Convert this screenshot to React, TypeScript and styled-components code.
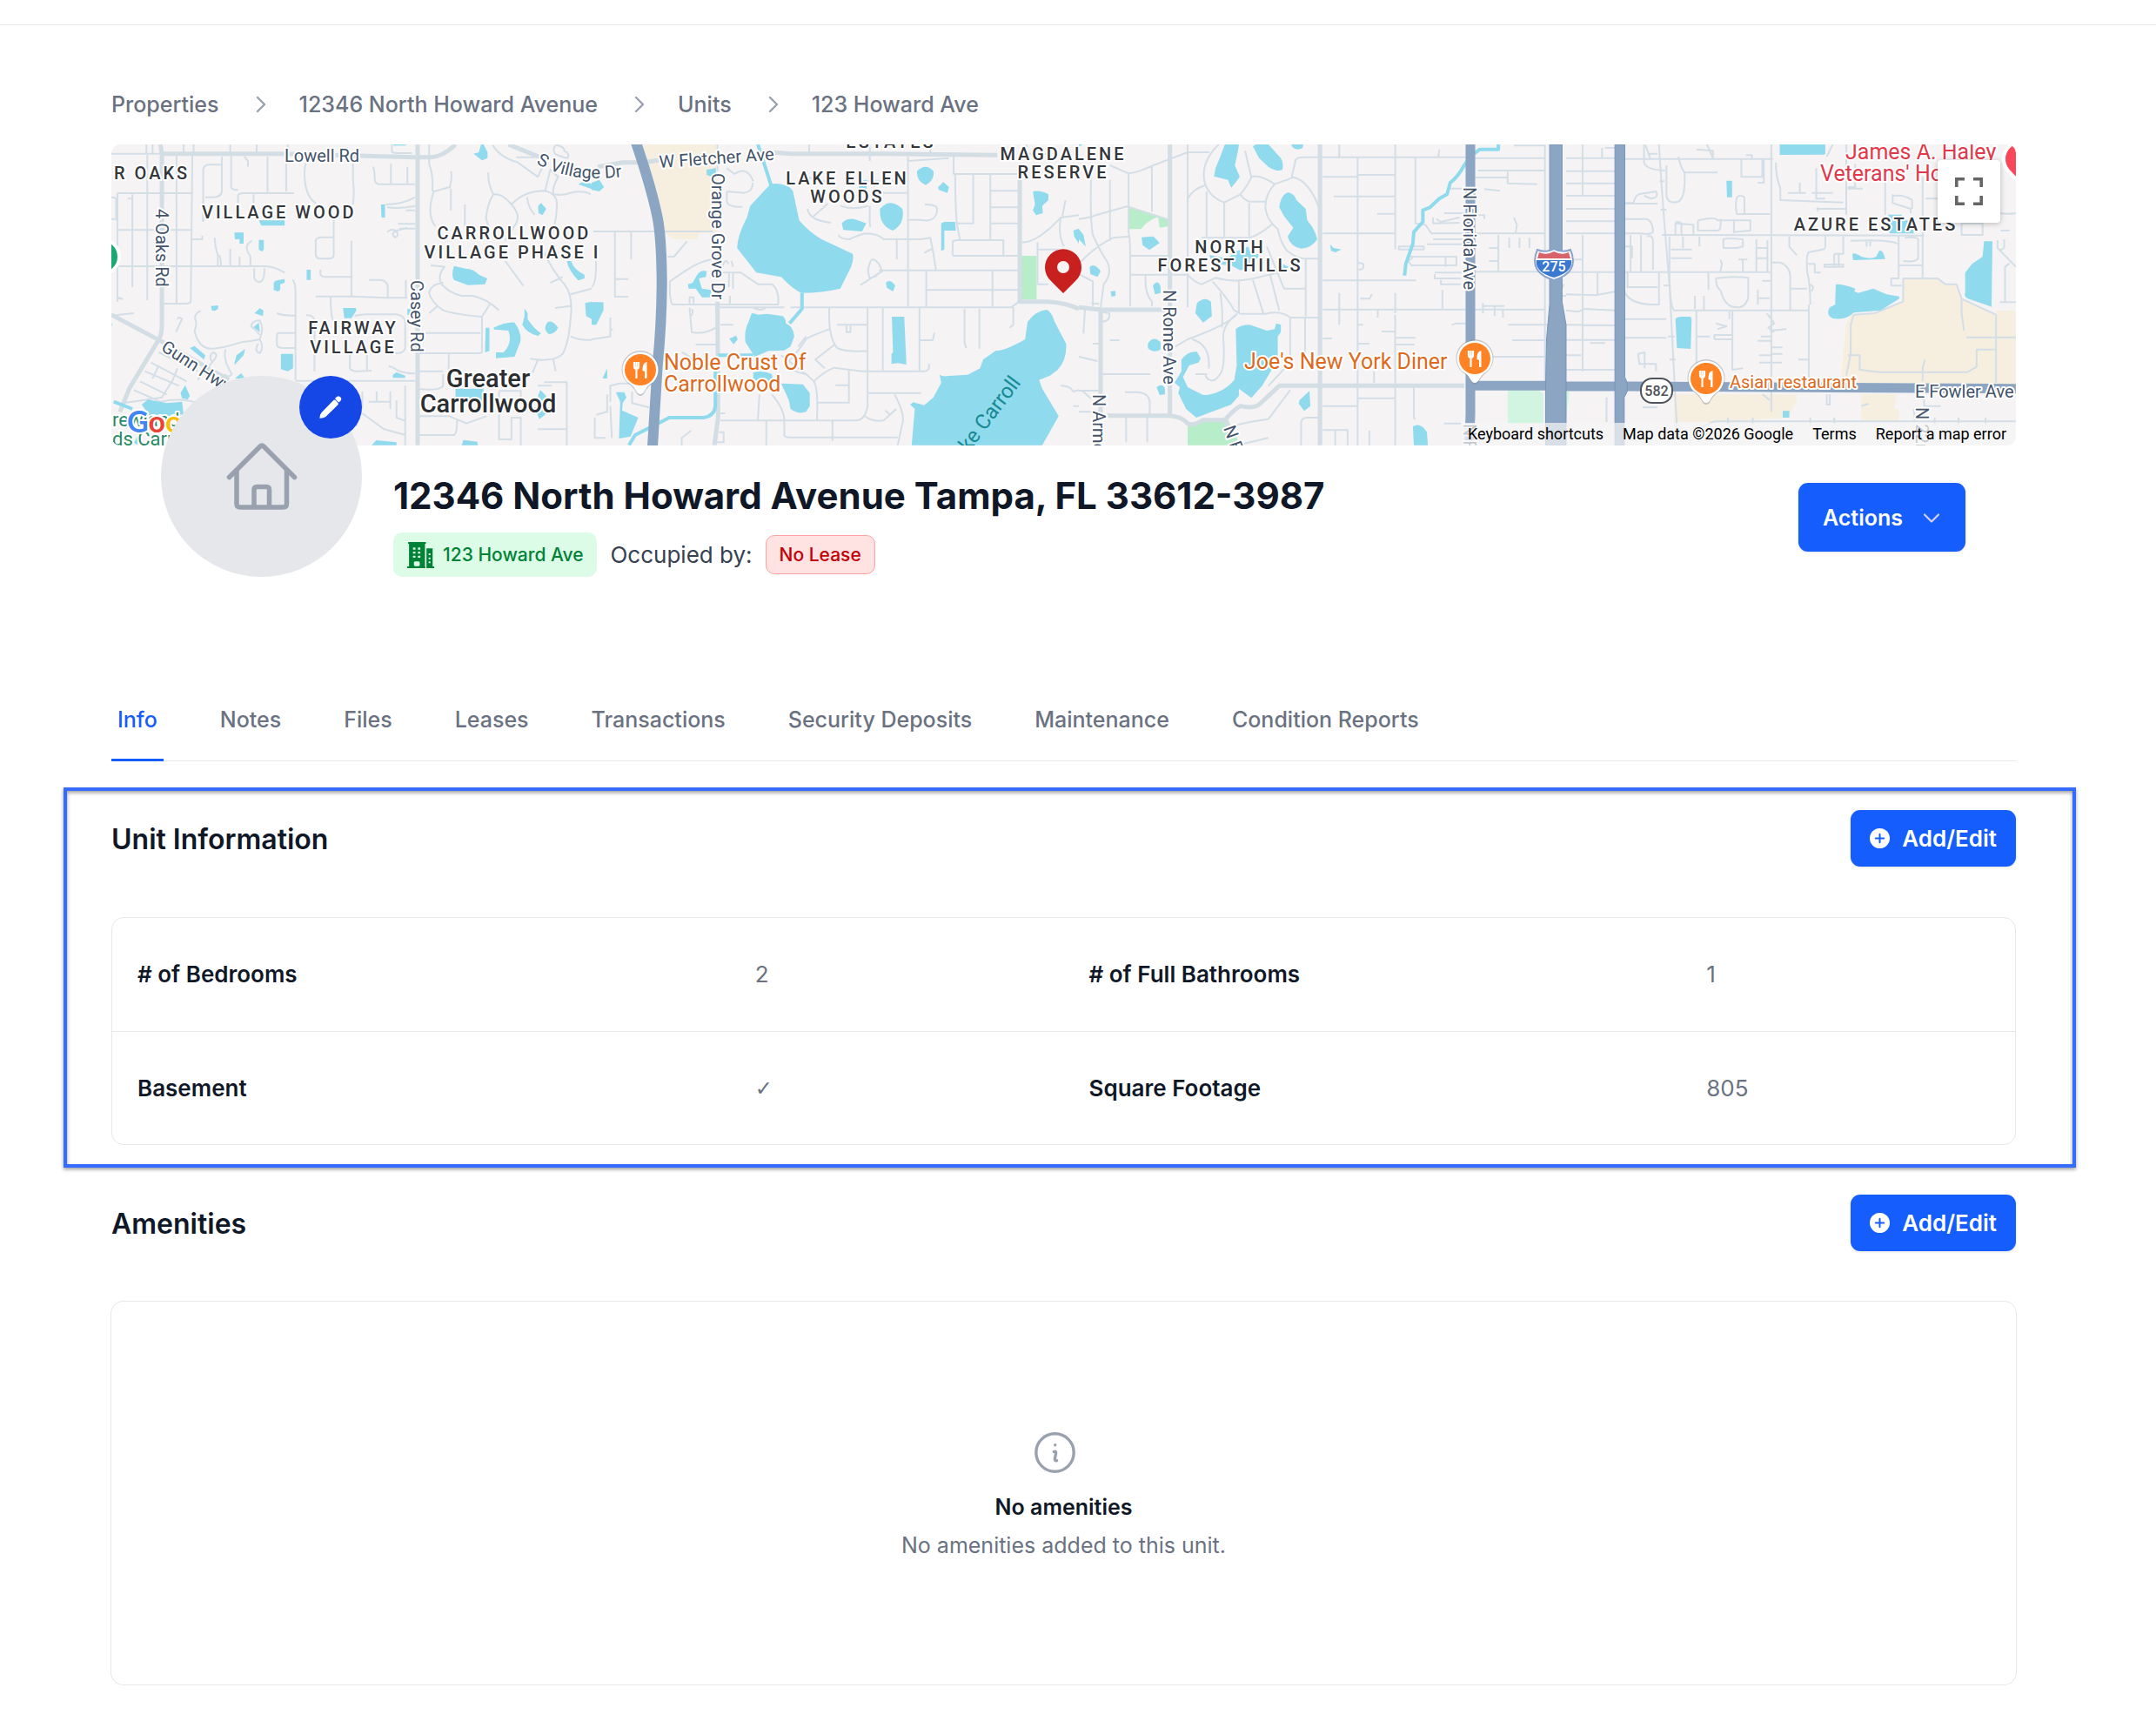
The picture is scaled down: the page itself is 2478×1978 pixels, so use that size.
import React from "react";
import styled, { createGlobalStyle, css } from "styled-components";

const GlobalStyle = createGlobalStyle`
  *, *::before, *::after { box-sizing: border-box; }
  body {
    margin: 0;
    background: #ffffff;
    color: #101828;
    font-family: Inter, "Liberation Sans", sans-serif;
  }
  h1, h2, h3, p, ol, dl, dd { margin: 0; padding: 0; }
  button { font-family: inherit; border: 0; cursor: pointer; }
`;

const Page = styled.div`
  padding-top: 28px;
`;

const Main = styled.main`
  border-top: 1px solid #e5e7eb;
  padding: 71px 161px 41px 128px;
`;

/* ---------- Breadcrumbs ---------- */

const Crumbs = styled.ol`
  display: flex;
  align-items: center;
  gap: 28px;
  list-style: none;
  height: 40px;
  margin-bottom: 26px;
`;

const Crumb = styled.li`
  display: flex;
  align-items: center;
  gap: 28px;
`;

const CrumbLink = styled.a`
  color: #6a7282;
  font-size: 25px;
  line-height: 36px;
  font-weight: 500;
  text-decoration: none;
`;

/* ---------- Map ---------- */

const MapFrame = styled.div`
  position: relative;
  height: 346px;
  border-radius: 10px;
  overflow: hidden;
  background: #f5f3f4;
`;

const MapCanvas = styled.svg`
  display: block;
  width: 100%;
  height: 100%;
  font-family: Roboto, sans-serif;

  .roads path { vector-effect: non-scaling-stroke; fill: none; stroke: #d3dee6; stroke-width: 2; stroke-linejoin: round; }
  .roads .mid { stroke: #d3dde4; stroke-width: 5; }
  .water path { fill: #90daed; }
  .stream path { vector-effect: non-scaling-stroke; fill: none; stroke: #90daed; stroke-width: 4; stroke-linejoin: round; }
  .highway path { vector-effect: non-scaling-stroke; fill: none; stroke: #8ba5c2; stroke-width: 11; }
  .sand path { fill: #f6efdf; }
  .park path { fill: #b8edca; }
  .park .pale { fill: #d2f5e1; }
  text { paint-order: stroke; stroke: #ffffff; stroke-width: 4px; stroke-linejoin: round; }
`;

const AreaLabel = styled.text`
  font-size: 20px;
  font-weight: 500;
  letter-spacing: 3px;
  fill: #33363b;
`;

const TownLabel = styled.text`
  font-size: 29px;
  font-weight: 500;
  fill: #2b2d31;
`;

const RoadLabel = styled.text`
  font-size: 20px;
  fill: #43536a;
`;

const PlaceLabel = styled.text<{ $small?: boolean }>`
  font-size: ${(p) => (p.$small ? 20 : 25)}px;
  fill: #dd6a1c;
`;

const FullscreenButton = styled.button`
  position: absolute;
  top: 18px;
  right: 18px;
  width: 72px;
  height: 72px;
  display: grid;
  place-items: center;
  background: #ffffff;
  border-radius: 4px;
  box-shadow: 0 1px 6px rgba(0, 0, 0, 0.25);
`;

const MapFooter = styled.div`
  position: absolute;
  right: 0;
  bottom: 0;
  display: flex;
  gap: 22px;
  height: 26px;
  padding: 0 11px 0 8px;
  background: rgba(245, 245, 245, 0.72);
`;

const mapNote = css`
  padding: 0;
  background: none;
  color: #000000;
  font-family: Roboto, sans-serif;
  font-size: 18px;
  line-height: 26px;
  text-decoration: none;
`;
const MapNoteButton = styled.button`${mapNote}`;
const MapNoteText = styled.span`${mapNote}`;
const MapNoteLink = styled.a`${mapNote}`;

/* ---------- Unit header ---------- */

const UnitHeader = styled.header`
  display: flex;
  align-items: flex-start;
  gap: 36px;
  padding: 0 58px 0 57px;
`;

const Avatar = styled.div`
  position: relative;
  flex: none;
  width: 231px;
  height: 231px;
  margin-top: -80px;
  display: grid;
  place-items: center;
  border-radius: 50%;
  background: #e5e7eb;
`;

const EditPhoto = styled.button`
  position: absolute;
  top: 0;
  right: 0;
  width: 72px;
  height: 72px;
  padding: 0;
  display: grid;
  place-items: center;
  border-radius: 50%;
  background: #1447e6;
`;

const HeaderText = styled.div`
  flex: 1;
  padding-top: 29px;
`;

const Title = styled.h1`
  font-size: 42px;
  line-height: 58px;
  font-weight: 700;
`;

const Status = styled.div`
  display: flex;
  align-items: center;
  gap: 15px;
  margin-top: 13px;
  color: #364153;
  font-size: 26px;
  line-height: 36px;
`;

const UnitBadge = styled.span`
  display: flex;
  align-items: center;
  gap: 10px;
  height: 51px;
  padding: 0 16px;
  border-radius: 10px;
  background: #dcfce7;
  color: #008236;
  font-size: 21px;
  font-weight: 500;
`;

const LeaseBadge = styled.span`
  display: flex;
  align-items: center;
  height: 45px;
  padding: 0 15px;
  border: 1px solid #ffa2a2;
  border-radius: 10px;
  background: #ffe2e2;
  color: #c10007;
  font-size: 21px;
  font-weight: 500;
`;

const PrimaryButton = styled.button<{ $large?: boolean }>`
  display: flex;
  align-items: center;
  gap: ${(p) => (p.$large ? 22 : 14)}px;
  height: ${(p) => (p.$large ? 79 : 65)}px;
  padding: 0 ${(p) => (p.$large ? 28 : 22)}px;
  border-radius: 11px;
  background: #155dfc;
  box-shadow: 0 1px 3px rgba(0, 0, 0, 0.12);
  color: #ffffff;
  font-size: ${(p) => (p.$large ? 25 : 26)}px;
  font-weight: 600;
  line-height: 36px;
`;

const ActionsSlot = styled.div`
  padding-top: 43px;
`;

/* ---------- Tabs ---------- */

const Tabs = styled.div`
  display: flex;
  gap: 58px;
  margin-top: 145px;
  box-shadow: inset 0 -1px #e5e7eb;
`;

const Tab = styled.button<{ $active?: boolean }>`
  padding: 1px 7px 27px;
  border-bottom: 3px solid ${(p) => (p.$active ? "#155dfc" : "transparent")};
  background: none;
  color: ${(p) => (p.$active ? "#155dfc" : "#6a7282")};
  font-size: 25px;
  line-height: 36px;
  font-weight: 500;
`;

/* ---------- Sections ---------- */

const Highlighted = styled.section`
  margin: 30px -69px 0 -55px;
  padding: 22px 65px 22px 51px;
  border: 4px solid #366bff;
  box-shadow: 0 2px 4px rgba(0, 0, 0, 0.4), inset 0 2px 4px rgba(0, 0, 0, 0.4);
`;

const Section = styled.section`
  margin-top: 31px;
`;

const SectionHead = styled.div`
  display: flex;
  align-items: center;
  justify-content: space-between;
  margin-bottom: 58px;
`;

const SectionTitle = styled.h2`
  padding-top: 3px;
  font-size: 32px;
  line-height: 48px;
  font-weight: 600;
`;

const Facts = styled.dl`
  display: grid;
  grid-template-columns: 1fr 1fr;
  border: 1px solid #e5e7eb;
  border-radius: 14px;
`;

const Fact = styled.div`
  display: grid;
  grid-template-columns: repeat(3, 1fr);
  gap: 29px;
  align-items: center;
  height: 130px;
  padding: 0 29px;
  font-size: 26px;
  line-height: 36px;

  &:nth-child(n + 3) { border-top: 1px solid #e5e7eb; }
`;

const FactName = styled.dt`
  grid-column: span 2;
  font-weight: 600;
`;

const FactValue = styled.dd`
  color: #6a7282;
`;

const Check = styled.span`
  font-family: "DejaVu Sans", sans-serif;
  font-size: 24px;
`;

const EmptyCard = styled.div`
  display: flex;
  flex-direction: column;
  align-items: center;
  padding: 150px 0 138px;
  border-radius: 14px;
  box-shadow: 0 0 0 1px #e5e7eb;
  font-size: 25px;
  line-height: 44px;
`;

const EmptyIcon = styled.div`
  height: 64px;
  padding-right: 21px;
`;

const EmptyTitle = styled.h3`
  font-size: 25px;
  font-weight: 600;
`;

const EmptyText = styled.p`
  color: #6a7282;
`;

/* ---------- Icons ---------- */

const ChevronRight = () => (
  <svg width="36" height="36" viewBox="0 0 36 36" fill="none" stroke="#99a1af" strokeWidth="2.400" strokeLinecap="round" strokeLinejoin="round" aria-hidden>
    <path d="M16 10l8 8-8 8" />
  </svg>
);

const ChevronDown = () => (
  <svg width="22" height="22" viewBox="0 0 22 22" fill="none" stroke="#d9d0ff" strokeWidth="2.200" strokeLinecap="round" strokeLinejoin="round" aria-hidden>
    <path d="M3 7.500l8 8 8-8" />
  </svg>
);

const PlusCircle = () => (
  <svg width="23" height="23" viewBox="0 0 23 23" aria-hidden>
    <circle cx="11.5" cy="11.5" r="11.5" fill="#fff" />
    <path d="M11.5 6.8v9.4M6.8 11.5h9.4" stroke="#155dfc" strokeWidth="2" strokeLinecap="round" />
  </svg>
);

const HouseIcon = () => (
  <svg width="82" height="78" viewBox="259.5 508 82 78" fill="none" stroke="#99a1af" strokeWidth="5.500" strokeLinecap="round" strokeLinejoin="round" aria-hidden>
    <path d="M263 547.500L298 512.500Q300.500 510 303 512.500L338 547.500" />
    <path d="M271.500 540V578Q271.500 582 275.500 582H325Q329 582 329 578V540" />
    <path d="M291.500 581V562Q291.500 558.500 295 558.500H305.500Q309 558.500 309 562V581" />
  </svg>
);

const PencilIcon = () => (
  <svg width="26" height="26" viewBox="690 106 74 78" preserveAspectRatio="none" fill="#fff" aria-hidden>
    <path d="M691 183Q691 172 697 164L737 120Q740 118 743 121L751 130Q754 133 751 137L711 178Q703 183 693 183Z" />
    <path d="M743 113L749 108Q752 106 756 108L761 112Q763 116 761 121L756 127Q754 129 751 126L743 118Q741 115 743 113Z" />
  </svg>
);

const BuildingIcon = () => (
  <svg width="31" height="30" viewBox="975 608 88 90" preserveAspectRatio="none" fill="#008236" aria-hidden>
    <path d="M978 608H1036V614H1033V692H1034V698H975V692H981V614H978Z" />
    <path d="M1038 630H1058V692H1063V698H1038Z" />
    <g fill="#dcfce7">
      {[627, 641, 655].map((y) => (
        <g key={y}>
          <rect x="994" y={y} width="8" height="7" rx="1.500" />
          <rect x="1010" y={y} width="8" height="7" rx="1.500" />
        </g>
      ))}
      <rect x="997" y="675" width="19" height="16" rx="4" />
      {[647, 661, 675].map((y) => (
        <rect key={y} x="1045" y={y} width="6" height="6" rx="1.500" />
      ))}
    </g>
  </svg>
);

const InfoIcon = () => (
  <svg width="47" height="47" viewBox="0 0 47 47" fill="none" stroke="#99a1af" strokeLinecap="round" strokeLinejoin="round" aria-hidden>
    <circle cx="23.500" cy="23.500" r="21.700" strokeWidth="3.400" />
    <path d="M22.300 22.500Q25.200 21.500 24.600 24.500L23.400 30.500Q23 33.500 25.600 32.700" strokeWidth="3.400" />
    <circle cx="23.700" cy="14.800" r="1.700" fill="#99a1af" stroke="none" />
  </svg>
);

const FullscreenIcon = () => (
  <svg width="32" height="32" viewBox="0 0 32 32" fill="none" stroke="#666" strokeWidth="3.600" aria-hidden>
    <path d="M1.800 11V1.800H11M21 1.800H30.200V11M30.200 21V30.200H21M11 30.200H1.800V21" />
  </svg>
);

/* ---------- Map drawing ---------- */

const FoodPin = ({ x, y }: { x: number; y: number }) => (
  <g transform={`translate(${x} ${y})`}>
    <path d="M0 30Q-3 30-5 26Q-8 20-15 15A21.500 21.500 0 1 1 15 15Q8 20 5 26Q3 30 0 30Z" fill="#8a8f96" opacity=".45" />
    <path d="M0 28Q-3 28-5 24Q-8 18-15 14A20.500 20.500 0 1 1 15 14Q8 18 5 24Q3 28 0 28Z" fill="#fff" />
    <circle r="18" fill="#ff8324" />
    <path d="M-7-9V-4Q-7-1-4.500-1Q-2-1-2-4V-9M-4.500-9V10" stroke="#fff" strokeWidth="2.200" fill="none" />
    <path d="M2.500 1Q2-8 7.500-9V10H5V2Z" fill="#fff" />
  </g>
);

const WEST = "translate(120 160) scale(.35714 .33333)";
const CENTER = "translate(680 160) scale(.35714 .33333)";
const NORTHEAST = "translate(1240 160) scale(.35714 .33333)";
const EAST = "translate(1800 160) scale(.34436 .33333)";

const WestTile = () => (
  <g transform={WEST}>
    <g className="roads">
      <path d="M22 50H185M135 18V50M155 18V50M255 18V50M287 18V50M405 18V50M490 18V45M590 18V45M42 186H285M42 186V560M60 552L42 545M90 190V510M75 205H90M138 55V555M232 55V565M283 55L278 560Q275 567 265 567H190M45 313H278M22 438H520Q550 440 580 460M22 200Q38 200 38 210V280M22 275H38M280 345H315V332M318 285V105Q320 90 335 88H375M378 60V180Q375 200 350 200H325M408 50V165Q410 175 430 175M450 60L462 75V95M430 220V195Q432 186 445 186H610M480 190V220M525 60V186M585 70V180M655 60Q640 100 645 140Q650 200 680 220M800 60V140Q805 180 800 225M865 95Q870 110 870 140Q872 155 885 155H1000M922 85V155M975 95V155M925 18V40Q925 48 940 48H990M738 280V400Q738 412 720 412H695Q680 412 680 395V350Q682 338 700 338H738M795 350V543M695 450V465Q697 475 712 475H795M680 542H800L905 547H975M852 485H890Q912 490 912 510V545M970 485V545M728 543Q728 600 735 625M605 485Q615 490 615 530V830M555 600Q570 608 612 608M612 668H560Q555 670 555 680V710Q558 720 575 720H612M650 607Q672 605 676 625V800M615 833H1000M805 610Q815 605 850 604H940Q965 608 968 630V720Q965 738 940 738H905M790 740V790Q795 800 810 800L860 798M845 740V797M915 782Q930 785 945 798Q970 808 1000 808M970 245H1000M905 225Q960 225 1000 200M910 235Q950 240 1000 230M945 292H1000M950 308H1000M910 320Q925 305 940 318Q950 335 935 338Q920 325 940 315L975 305" />
      <path d="M355 340Q355 370 365 400V435M370 400Q375 410 375 435M405 378V438M435 405V438M475 350Q450 365 462 390L470 405V438M482 445V475Q485 493 500 492Q515 490 515 445M318 285V240M310 592Q290 600 292 620Q300 640 290 660Q300 710 330 720Q350 730 440 700Q480 695 500 690Q515 720 500 738Q480 730 495 705M500 690Q515 650 500 625Q475 625 472 645Q490 660 500 675M345 765Q335 745 350 735Q370 740 350 765L300 830M390 725Q380 760 410 810Q400 825 385 810M235 620Q240 610 250 620L230 665M175 735L300 800M150 770L265 835M130 800L240 850M115 835L200 880M95 865L180 905Q250 890 300 910M60 910L185 890L220 830L235 790M155 825L175 780M22 608L95 600" />
      <path d="M1045 18V85Q1060 130 1055 180M1115 110Q1120 130 1112 165Q1080 175 1060 180Q1035 260 1065 300M1115 170V245M1160 225V300M1235 115Q1235 160 1252 190Q1235 215 1228 270L1235 300M1252 190Q1280 185 1310 225Q1340 260 1325 290L1290 350M1310 225Q1350 180 1410 178Q1445 180 1455 210Q1460 260 1440 330M1360 200Q1365 240 1385 260M1250 20Q1270 60 1330 80L1395 130M1325 62H1385M1395 130L1410 95M1418 180L1435 105L1460 130Q1440 170 1445 190Q1480 195 1500 185Q1540 175 1565 190M1450 50Q1440 30 1455 20Q1480 25 1480 40Q1500 50 1490 65Q1465 60 1450 50M1050 435L1095 440Q1070 470 1085 500Q1110 530 1150 540H1185Q1230 550 1270 590M1090 495Q1050 500 1045 530Q1050 560 1090 590Q1130 605 1215 612L1240 570M1045 600L1072 575M1290 420L1348 505M1215 610V735Q1212 738 1200 738H1005M1005 668H1210M1108 738V800M1005 800H1090M1415 390Q1440 450 1480 500Q1510 540 1500 620Q1495 700 1475 740Q1450 770 1370 757M1435 495L1475 475M1500 535L1568 515M1450 582L1500 575M1500 680Q1530 695 1568 692M1395 760L1378 805M1445 760L1452 800M1415 838H1488V1055M1270 868H1340L1340 900M1270 870V1035H1310V960H1340V1055M1005 1020H1125Q1135 1015 1135 970M1010 955L1110 955L1165 980L1230 955M1005 860Q1080 870 1090 850V810M830 870V920L810 990M876 870V905M920 870V930M968 850V1055M850 905H920M830 945L900 1000L970 1020M940 900V960L965 970M1395 1000H1488M1395 850H1440" />
      <path className="mid" d="M180 18L185 50H570L1005 62H1050Q1090 60 1130 18M185 50V640Q185 680 170 700L80 860L50 940M1008 18V1055M22 605L180 695L400 830M1300 18L1420 70" />
    </g>
    <g className="stream"><path d="M30 905L90 930M100 1050L130 990" /></g>
    <g className="water">
      <path d="M497 280H580V298H505ZM418 322H448V360H435V345H420ZM497 347H513V380L507 388L497 380ZM651 450H664V485H651ZM545 495Q548 485 580 482V495L566 500V520L558 525L545 520ZM343 575L366 573V585L355 592L346 590ZM483 600L500 583L512 590L510 610ZM480 648L497 632L500 665ZM768 582H810V592L795 617H772ZM568 740H607V790L590 800L568 793ZM928 812L940 804L968 815V823H928ZM890 225H903V270H892ZM930 18H970V22H930ZM1188 50L1205 45L1212 18H1220L1233 45V65L1215 73ZM1396 230L1405 220L1422 240L1410 262L1397 255ZM1125 437L1165 447Q1185 445 1205 467L1232 480L1225 500L1170 503L1125 485Q1115 470 1125 437ZM1488 420H1502Q1510 450 1545 467V480L1525 487Q1495 455 1488 420ZM1227 650H1239V730L1225 735ZM1252 650Q1290 630 1320 632Q1345 670 1338 700L1320 750L1260 755V735H1285Q1315 700 1300 660L1255 656ZM1352 583L1362 600V620Q1380 650 1405 670L1395 678Q1360 670 1345 640L1352 610ZM1425 632Q1440 620 1460 650Q1450 672 1430 672Q1410 655 1425 632ZM1130 860H1220V905H1130ZM1403 865L1422 885L1415 900L1435 935L1400 965L1390 940L1405 900L1395 885ZM860 1055L875 1038L940 1045V1055ZM1150 1055L1155 1037L1200 1043L1202 1055ZM1547 565L1568 560V620L1550 610ZM1525 155L1545 143L1568 155V172ZM275 720L290 713L325 745L320 760ZM418 775L425 745L453 723L448 745L420 777ZM420 825L440 807L453 825ZM245 875L260 848L275 885L268 897L250 893ZM120 915L140 898L200 910L250 905L255 950L150 960ZM22 630V645L25 640ZM975 585H985V605H975Z" />
    </g>
  </g>
);

const CenterTile = () => (
  <g transform={CENTER}>
    <g className="sand"><path d="M165 18H405V320L345 325L340 345H265L230 320L215 200Z" /></g>
    <g className="park"><path d="M1381 402H1432V552H1381Z" /></g>
    <g className="roads">
      <path d="M5 318H390M75 318V543H118M78 482H118M127 318V415M0 510Q15 500 14 420M0 690L60 680V615M60 655L68 657M405 18V110M435 180L490 185Q520 180 518 150M435 100L460 120Q500 90 520 145M435 180V215Q440 235 485 233M245 405H265L307 352M260 570H600Q605 520 580 500H535L480 460H420M260 570Q250 560 252 490L300 455Q350 420 385 415M415 460Q430 400 440 430M450 420L455 440M442 460V510M455 462V515M315 570V545H328V570M445 570V540M400 580H620M640 580H1350L1375 560M520 580Q540 595 560 582M315 580L322 665Q360 675 400 650M322 585Q330 600 318 610M415 640H455M335 708H400M695 240Q700 280 770 288M712 268L760 222M690 130L760 148M895 18V75M700 18V50M880 145H1015M905 185H1015M895 230V290Q898 310 895 290M800 230Q840 245 890 230M795 330Q800 345 830 345Q860 330 880 325Q920 325 940 345H1060L1090 340Q1100 390 1108 450M1070 392L1095 378M982 348V415M925 452H1378M865 503L935 455L925 430Q900 400 895 430Q885 450 895 480L920 470M1018 60V580M1020 278H1060Q1110 290 1112 240Q1110 225 1072 225M1077 455V580M1077 520H1378M1165 60V120H1375M1170 120Q1170 220 1175 290H1228V120M1283 120V345M1283 178H1375M1283 235H1375M1283 290H1375M1175 290L1185 345M1375 402H1165Q1160 400 1162 380V352L1175 348H1325V400M1400 18V50H1480M1090 18V60M1020 75L1150 65M765 580Q760 680 790 720Q820 735 888 730M888 580V920Q880 970 850 970H415M790 640H888M820 642V665H833V642M937 580V800M765 655Q700 680 690 690Q640 770 620 775Q640 800 690 810L715 835Q730 860 725 968M715 835Q750 800 780 788L870 800H1070Q1090 800 1085 775M780 710L720 760L750 790M1055 580V800M1055 693H1098L1103 668M1200 585V700L1205 720M1248 585V722M1357 580V640L1345 650M785 848H828M728 908H828V795M890 875H1060M975 880Q1010 950 1000 980L985 1055M880 955Q900 975 940 970L980 930M945 935L960 950M540 880L535 968M580 880Q620 930 620 970V1020Q620 1028 640 1028H985M775 970V1040M562 970V1055M290 1055V1030L320 1005M410 1010H425V1045H400M415 945H430M690 680L665 715M1290 452V580M1385 355Q1430 360 1510 270L1568 262M1510 270Q1500 330 1520 370M1525 210L1515 265M1435 355V500M1435 500H1470M1435 380H1500M1510 850Q1540 850 1550 870L1568 865M1550 920H1568" />
      <path d="M130 870V910L185 925M60 905V850L90 842H125M10 960V1030H45M50 880V940L15 950M60 920L65 1030M610 745L690 810M290 735Q330 750 325 790" />
      <path className="mid" d="M20 95L100 80H170L230 70M580 45L640 50H900L1305 55M1378 110V560H1470Q1530 565 1568 585M405 560L407 960L395 1055" />
    </g>
    <g className="stream"><path d="M535 18L578 160M677 530V585L637 635M407 745H520M398 800V920Q395 955 360 960H250L140 1020L120 1055" /></g>
    <g className="water">
      <path d="M575 155Q600 150 625 160Q650 170 650 190L668 280Q700 320 740 345L840 395Q845 410 835 440L800 515Q740 530 675 530Q650 520 610 475L530 460L468 375Q470 330 500 270L510 230ZM515 600Q525 600 535 605L565 602L615 610Q625 620 625 635Q650 645 652 680L640 715L620 728L570 730L525 750L495 700Q490 660 505 630ZM520 805Q550 795 580 810L583 828L570 840L520 830ZM610 842L680 845L702 875V920L690 940Q665 950 640 930L635 900ZM443 688L465 677L470 690L457 707ZM1047 110Q1075 80 1100 110Q1105 140 1075 158Q1045 145 1047 110ZM1115 165L1132 148L1150 165L1145 185L1117 175ZM928 240Q960 200 1000 240Q1010 290 970 315Q925 300 928 240ZM805 290Q820 272 845 275L884 290L870 318L810 313ZM1125 290L1135 285H1170L1172 315H1135V380L1125 385ZM947 495Q960 480 977 505L970 525L950 512ZM966 612H1006L1013 777L985 772L965 775V740L970 735ZM310 500L325 495L338 470Q350 450 370 455L368 475L345 480L355 515L385 520L383 545H355L335 515L312 515ZM78 872H105L112 890L100 910L98 935L150 960L125 1025L88 1032L92 905ZM35 825L50 790L50 825ZM0 562H38V590L15 640H0ZM0 150L25 140L40 165L25 180L0 175ZM1420 180Q1445 175 1470 190V210L1450 230L1452 255L1430 262L1420 245L1427 225ZM1550 315L1568 308V360L1553 335ZM370 105L400 100V125L385 130L370 122ZM860 145L885 140V170H860Z" />
      <path d="M1120 812Q1130 820 1150 816L1210 812L1250 790L1260 760L1300 730Q1330 730 1395 690L1403 630Q1430 590 1465 588Q1480 595 1490 630L1527 705Q1530 760 1500 795L1475 815L1440 830L1450 860L1503 955L1450 1055H1030L1040 930L1025 915L1035 907L1070 917L1100 890L1125 840Z" />
    </g>
    <g className="highway"><path d="M143 12Q190 160 210 260Q225 330 226 500Q225 640 212 780L196 1060" style={{ strokeWidth: 12 }} /></g>
  </g>
);

const NorthEastTile = () => (
  <g transform={NORTHEAST}>
    <g className="park">
      <path d="M160 230L290 275V300L260 305L255 268Q220 280 200 310H160ZM350 985L400 968H480L520 1055H350Z" />
      <path className="pale" d="M1380 865L1480 865L1495 880V980H1380Z" />
    </g>
    <g className="roads">
      <path d="M0 275Q40 270 60 260L155 232L290 278M100 90L160 118Q190 115 235 92L350 45L420 45M160 118V320Q165 340 165 400V575M235 92V250M350 18V580M40 100Q35 280 45 330Q70 390 90 420Q110 460 80 500L70 580M100 140V350M0 430Q50 370 110 340L160 335M165 402H290M165 467H350M215 470Q210 530 235 560V575M0 465L45 490V575M40 565L65 568M20 575L15 670M70 595L98 600V615Q90 630 75 628M100 693H130M45 705H70M75 810H230M0 750L60 765M0 867H70M10 867L40 895M148 872H190Q225 875 228 905V950M75 953H290M152 960V1045M220 960V1045M0 940H60M350 205Q370 170 405 160M450 18Q390 80 405 150Q420 200 468 218L520 190Q550 150 555 130Q545 90 535 40M555 130Q580 120 630 155Q700 130 685 130Q740 140 772 235M630 155Q600 190 600 235Q605 280 640 310Q650 360 670 385Q700 410 725 412H775M520 190Q530 210 550 215H600M468 218V335M548 220V335M411 180V335M395 340H540Q570 340 625 290M605 370L660 515H730M730 410V610M685 130L698 70Q705 62 720 62H1250M352 470Q375 495 395 500L440 478Q510 500 600 470L645 460M430 490Q480 550 500 590L520 602H600Q650 590 680 615H775M515 490V600M560 485L595 605M615 465Q635 550 645 590M455 530Q465 600 460 650M510 602Q460 640 465 690Q470 770 460 800Q440 840 420 830Q405 820 410 810H375M510 602Q480 640 350 690L310 715M365 690Q425 710 418 790M680 615V770L610 850M728 615V760M838 18V62M897 65V1055M1018 18V375M1018 65V380M785 130H897M897 123H1018M820 197H1018M960 257H1018M785 325H1018M1083 65V290L1115 295L1135 325H1500M785 487H1085M897 487V590M785 587H1500M838 530V640M897 425L915 430Q920 450 900 450M905 550H935L943 535M1018 530V600M962 590V615M897 640H915M975 663H1015M897 705H935M785 687H815M1020 685H1083M1020 708H1080M950 800V840M785 920H897M897 893H1018M1018 605V1055M1078 855V960L1083 965M785 1003H865V1055M825 1003V1055M935 1005V1055M715 1055V980Q715 960 735 960H770M510 1055L610 1030M490 990Q560 970 610 965L680 865M1030 370H1110V380H1030ZM1065 405H1215V435H1070L1060 420L1075 408M1180 405V440M1145 460H1250M1145 465V480H1230M1165 485V500H1230M1170 520V585M1140 270V290L1225 288M1150 275L1165 285L1225 270M1175 255H1250M1140 345H1235M1120 362H1240M1185 170H1250M1200 640L1215 635H1250M1270 65H1500M1285 108H1500M1275 132H1380M1380 110V152L1475 155M1305 172L1355 178M1270 262H1305V275M1400 270L1410 295L1405 325M1385 340V375M1418 340V375M1450 340V375M1350 330V455M1320 375H1350M1320 420H1350M1275 457H1568M1500 18V850M1300 565V600M1298 575H1370M1338 575V610M1365 590V615M1382 640H1510M1395 693H1510M1330 750H1510M1175 980H1230M1400 22H1500M1160 35L1157 60M1018 18V65M1560 500L1545 540H1568" />
      <path className="mid" d="M293 18V950M776 18V1055M0 580L70 588H290M70 588V950M90 953H290Q330 955 350 980Q370 990 400 968H470Q500 930 520 920Q560 930 580 915L645 850H1240M470 968L485 1010" />
    </g>
    <g className="stream"><path d="M1350 18V35H1290L1260 60L1240 90Q1220 130 1195 150L1185 190L1160 205L1130 235L1107 245V285L1078 320L1075 360L1052 430L1048 470" /></g>
    <g className="water">
      <path d="M470 18H515L512 40L502 90L518 130Q505 150 490 167L480 140L435 128L440 100L455 60ZM560 25L570 18H610L650 65Q660 80 655 105Q640 115 610 95L580 65ZM685 18H722L720 30Q700 42 685 25ZM645 235Q650 190 675 183Q695 190 700 210L730 240L735 280Q760 310 767 345Q750 375 715 377Q680 370 672 335L690 305L660 265ZM202 338L240 335L260 358L227 382L205 365ZM35 440Q50 425 70 455L60 475L37 465ZM102 525L118 523V540L105 543ZM238 505Q255 480 263 510V530L245 535ZM0 310L15 330L22 370L0 345ZM380 565Q405 540 425 560L428 610L400 632L375 600ZM222 705Q240 675 263 700V725Q240 740 222 720ZM250 855Q270 840 277 860V880L260 882ZM710 900L742 868L745 920L725 937L708 912ZM1075 990Q1100 975 1120 1010L1123 1055H1078ZM808 362L820 375L845 380L825 390L812 385ZM420 400L480 410L500 390L545 370L555 400L580 395L575 410L550 415V440L520 452L490 435L430 430ZM655 430L675 440L660 455Z" />
      <path d="M505 655Q520 640 550 640L605 660L630 655L635 635L650 640V665L640 680V760L590 850L555 892L515 860V885L490 915L378 960L345 930L320 875L325 855L308 840L330 800V760Q350 730 380 733L392 755L385 770L355 780L335 820L350 855L400 882Q460 880 500 830L508 780Z" />
      <path d="M0 18H12L0 28Z" />
    </g>
    <g className="highway">
      <path d="M1260 18V950L1256 1055M1255 850H1568" />
      <path d="M1515 18H1555V560L1568 640V1055H1502V860L1505 690L1515 570Z" style={{ fill: "#8ba5c2", stroke: "#7795ba", strokeWidth: 1 }} />
    </g>
  </g>
);

const EastTile = () => (
  <g transform={EAST}>
    <g className="sand">
      <path d="M1125 480H1240L1265 500H1303L1320 550L1435 605V590H1501V845H915L935 640L950 605L1030 600L1120 560ZM360 880H770V905L740 960L500 975H360ZM985 880H1105L1095 930H1110V975H985Z" />
    </g>
    <g className="park"><path className="pale" d="M0 870L12 870L0 960Z" /></g>
    <g className="roads">
      <path d="M0 65H165M0 110H165M0 152H165M0 195H165M0 240H165M0 283H165M55 18V195M55 330V590M0 325H165M25 415H55M0 458H165M105 460V535M0 535L100 538L165 525M0 590L40 595L60 585L165 590M55 590V800M0 640L165 642M0 692H165M80 703H130M0 745H50M0 795H165M120 30V65M130 30H165M190 68H690M260 18V80Q265 105 330 108M265 20L280 65M275 50H305M375 60Q380 90 395 115Q400 200 375 215Q340 225 335 195V90M395 115H505M470 18L490 65V40L435 35M585 70V130H655V70M600 55H620V68M190 222H305M195 220H225Q230 190 250 188L300 180Q310 200 285 205L260 195M195 275H270Q290 285 290 320Q280 330 250 325H190M215 330V460M250 330V455M270 335Q290 330 290 350V450M190 458H685M205 460V510H305M190 510Q200 575 310 570V460M190 620H335M190 685H335M195 370H220V410M345 335V460Q345 570 360 590H810M365 290Q370 280 385 290V330M365 330V290L425 295V330M440 280Q500 265 505 280H615V315L560 320M440 280V315H500Q520 320 515 275M560 280V325M320 330L1195 332M570 200Q580 190 595 200V258H570Q563 230 570 200M595 258H680M640 150H660V70M685 18V940M350 380H420M350 410H420M390 335V375M445 335V370M525 345Q530 340 590 345V370L570 375H525ZM635 345V460M672 348V458M635 375H672M635 410H672M515 415L520 430L515 455M575 415H605M590 415V455M640 520V570M640 548H680M475 460V520M500 480Q555 470 608 478V545Q600 580 570 580Q540 580 525 550L515 520Q500 510 500 480ZM430 540V585M460 540V590M435 590V800M555 590V795L590 790M435 680H480M495 690V675H555M495 690H555M500 635L535 645L505 655M545 595V620M670 600L695 635L675 650L695 665M735 655L680 660M650 680H685M640 695H685M685 718H722M685 740H722M645 745H685M645 770H720M775 760H808M685 425H715Q750 440 748 480V590M748 515H805M655 488H685M240 740L262 735V790M240 740L245 775H300V800M745 335V370L770 400M865 335V375M865 378L810 390Q800 400 805 460Q815 500 815 570M808 430H830V460H850M895 395V440M910 395V440M895 395H925V335M862 432H925V440H862ZM815 500L825 510L820 525M810 570V830M935 18V260M835 240H935M840 235V250M700 80Q700 130 715 170V210L925 218M740 185H800M780 150V185M835 100V205H865M820 185H890M890 18L870 60M965 85V165H940M940 170H990M1065 150V260M1090 190V220Q1150 240 1150 240V255M1090 195Q1130 190 1155 210V240M1190 130V480M1200 205H1240M1110 335V435H1190M1110 435V480H1085V505H1120M1130 340Q1170 335 1175 345V410Q1170 425 1125 420M950 350Q1080 345 1105 360M1003 350V370M1015 350V370M1440 348V375L1501 440M1462 345V375L1445 385M1465 560V440L1480 428M1448 562H1501M1450 255Q1480 260 1501 255M1320 290H1390V330H1320ZM1450 315H1480M940 745H980V795L1045 803H1340L1370 785V725H1435M1435 605V840M1435 605L1320 550V600L1328 660M1303 500L1320 550M1125 480V560L1030 600L960 605L950 640V740L935 815M1125 480H1240L1265 500H1303M1335 683H1501M1190 835V790L1197 760M870 880V915H880V880M985 920L1010 912M1165 975L1160 930M1195 895V920H1250M255 925H305M135 890V975M655 880L680 900M445 1000Q480 975 500 973H1501M540 960V985M623 960V985M815 960V985M895 960V985M1230 960V985M1310 960V985M1400 960V985" />
      <path d="M310 18Q320 200 345 500L370 1000" />
      <path d="M312 145H328M315 243H335M330 330H350M325 505H350M340 680H362M345 760H365" />
    </g>
    <g className="water">
      <path d="M713 18H865V50Q860 55 850 53L713 54ZM535 143H554V200H537ZM365 620Q370 612 385 612H415L419 620L416 723L370 720ZM723 937H745V960H723ZM955 395Q965 390 985 405Q1020 415 1035 405L1045 385Q1058 380 1065 413L958 417ZM900 500Q930 500 965 515L962 525L975 530L1025 515L1070 535L1112 542V550L1050 590L960 598Q935 625 890 618Q865 605 880 580L898 570ZM1395 352H1423L1420 578L1350 553Q1325 545 1332 530V460L1355 430L1390 405ZM1075 260H1120V275L1160 285V325H1080Z" />
    </g>
    <g className="highway">
      <path d="M0 852H200L1501 860" />
      <path d="M163 18H196V820L204 840V870L194 890V1055H163Z" style={{ fill: "#8ba5c2", stroke: "#7795ba", strokeWidth: 1 }} />
    </g>
  </g>
);

const MapLabels = () => (
  <>
    <AreaLabel x="131" y="206">R OAKS</AreaLabel>
    <AreaLabel x="232" y="251">VILLAGE WOOD</AreaLabel>
    <AreaLabel x="591" y="275" textAnchor="middle">CARROLLWOOD</AreaLabel>
    <AreaLabel x="589" y="297" textAnchor="middle">VILLAGE PHASE I</AreaLabel>
    <AreaLabel x="406" y="384" textAnchor="middle">FAIRWAY</AreaLabel>
    <AreaLabel x="406" y="406" textAnchor="middle">VILLAGE</AreaLabel>
    <AreaLabel x="1024" y="170" textAnchor="middle">ESTATES</AreaLabel>
    <AreaLabel x="974" y="212" textAnchor="middle">LAKE ELLEN</AreaLabel>
    <AreaLabel x="974" y="233" textAnchor="middle">WOODS</AreaLabel>
    <AreaLabel x="1222" y="184" textAnchor="middle">MAGDALENE</AreaLabel>
    <AreaLabel x="1222" y="205" textAnchor="middle">RESERVE</AreaLabel>
    <AreaLabel x="1414" y="291" textAnchor="middle">NORTH</AreaLabel>
    <AreaLabel x="1414" y="312" textAnchor="middle">FOREST HILLS</AreaLabel>
    <AreaLabel x="2156" y="265" textAnchor="middle">AZURE ESTATES</AreaLabel>
    <TownLabel x="561" y="445" textAnchor="middle">Greater</TownLabel>
    <TownLabel x="561" y="474" textAnchor="middle">Carrollwood</TownLabel>

    <RoadLabel x="327" y="186">Lowell Rd</RoadLabel>
    <RoadLabel transform="translate(179 240) rotate(90)">4 Oaks Rd</RoadLabel>
    <RoadLabel transform="translate(472 322) rotate(90)">Casey Rd</RoadLabel>
    <RoadLabel transform="translate(184 402) rotate(33)">Gunn Hwy</RoadLabel>
    <path id="village-drive" d="M616 188Q650 206 688 205T730 198" fill="none" />
    <RoadLabel><textPath href="#village-drive">S Village Dr</textPath></RoadLabel>
    <RoadLabel transform="translate(758 193) rotate(-4)">W Fletcher Ave</RoadLabel>
    <RoadLabel transform="translate(818 199) rotate(90)">Orange Grove Dr</RoadLabel>
    <RoadLabel transform="translate(1337 333) rotate(90)">N Rome Ave</RoadLabel>
    <RoadLabel transform="translate(1256 453) rotate(90)">N Armenia Ave</RoadLabel>
    <RoadLabel transform="translate(1406 492) rotate(70)">N Boulevard</RoadLabel>
    <RoadLabel transform="translate(1682 215) rotate(90)">N Florida Ave</RoadLabel>
    <RoadLabel transform="translate(1682 487) rotate(90)">N Florida Ave</RoadLabel>
    <RoadLabel transform="translate(2202 468) rotate(90)">N 22nd St</RoadLabel>
    <RoadLabel x="2201" y="457">E Fowler Ave</RoadLabel>

    <text transform="translate(1174 440) rotate(-53)" textAnchor="end" fontSize="24" fill="#178a94" style={{ stroke: "none" }}>Lake Carroll</text>
    <text x="129" y="490" fontSize="22" fill="#2a8a66">rewlands</text>
    <text x="129" y="512" fontSize="22" fill="#2a8a66">ds Carroll</text>
    <text x="146" y="497" fontSize="34" fontWeight="700" fontFamily="Lato">
      <tspan fill="#4285f4">G</tspan><tspan fill="#ea4335">o</tspan><tspan fill="#fbbc05">o</tspan>
    </text>

    <PlaceLabel x="763" y="425">Noble Crust Of</PlaceLabel>
    <PlaceLabel x="763" y="450">Carrollwood</PlaceLabel>
    <PlaceLabel x="1430" y="424">Joe's New York Diner</PlaceLabel>
    <PlaceLabel $small x="1988" y="446">Asian restaurant</PlaceLabel>
    <text x="2121" y="183" fontSize="25" fill="#e0394c">James A. Haley</text>
    <text x="2092" y="208" fontSize="25" fill="#e0394c">Veterans' Hospital</text>
  </>
);

const MapMarkers = () => (
  <>
    <circle cx="117" cy="295" r="20" fill="#19a974" stroke="#fff" strokeWidth="4" />
    <path d="M2323 212L2308 196A20 20 0 1 1 2338 196Z" fill="#f8475b" stroke="#fff" strokeWidth="4" />
    <FoodPin x={736} y={425} />
    <FoodPin x={1695} y={412} />
    <FoodPin x={1961} y={435} />
    <path d="M1222 337L1208 323A21 21 0 1 1 1236 323Z" fill="#c81f1f" />
    <circle cx="1222" cy="307" r="7" fill="#f5f3f4" />

    <path d="M1767 287Q1776 291 1786 286Q1796 291 1805 287Q1816 313 1786 322Q1756 313 1767 287Z" fill="#fff" stroke="#8aa3cb" strokeWidth="2" />
    <path d="M1769 290Q1777 294 1786 289Q1795 294 1803 290L1805 297H1767Z" fill="#d9636a" />
    <path d="M1766 299H1806Q1808 313 1786 319Q1764 313 1766 299Z" fill="#3b78cf" />
    <text x="1786" y="312" fontSize="16" fontWeight="500" fill="#fff" textAnchor="middle" style={{ stroke: "none" }}>275</text>

    <rect x="1886" y="435" width="36" height="28" rx="13" fill="#fff" stroke="#50555c" strokeWidth="2" />
    <text x="1904" y="455" fontSize="16" fontWeight="500" fill="#4b4f56" textAnchor="middle" style={{ stroke: "none" }}>582</text>
  </>
);

const AreaMap = () => (
  <MapFrame>
    <MapCanvas viewBox="128 166 2189 346" preserveAspectRatio="xMidYMid slice" role="img" aria-label="Map">
      <EastTile />
      <NorthEastTile />
      <CenterTile />
      <WestTile />
      <MapLabels />
      <MapMarkers />
    </MapCanvas>
    <FullscreenButton aria-label="Toggle fullscreen view"><FullscreenIcon /></FullscreenButton>
    <MapFooter>
      <MapNoteButton>Keyboard shortcuts</MapNoteButton>
      <MapNoteText>Map data ©2026 Google</MapNoteText>
      <MapNoteLink href="#terms">Terms</MapNoteLink>
      <MapNoteLink href="#report">Report a map error</MapNoteLink>
    </MapFooter>
  </MapFrame>
);

/* ---------- Page ---------- */

const crumbs = ["Properties", "12346 North Howard Avenue", "Units", "123 Howard Ave"];

const tabs = ["Info", "Notes", "Files", "Leases", "Transactions", "Security Deposits", "Maintenance", "Condition Reports"];

const facts = [
  { name: "# of Bedrooms", value: "2" },
  { name: "# of Full Bathrooms", value: "1" },
  { name: "Basement", value: <Check>✓</Check> },
  { name: "Square Footage", value: "805" },
];

const AddEdit = () => (
  <PrimaryButton>
    <PlusCircle />
    Add/Edit
  </PrimaryButton>
);

export default function App() {
  return (
    <Page>
      <GlobalStyle />
      <Main>
        <nav aria-label="Breadcrumb">
          <Crumbs>
            {crumbs.map((label, i) => (
              <Crumb key={label}>
                {i > 0 && <ChevronRight />}
                <CrumbLink href="#">{label}</CrumbLink>
              </Crumb>
            ))}
          </Crumbs>
        </nav>

        <AreaMap />

        <UnitHeader>
          <Avatar>
            <HouseIcon />
            <EditPhoto aria-label="Edit photo"><PencilIcon /></EditPhoto>
          </Avatar>
          <HeaderText>
            <Title>12346 North Howard Avenue Tampa, FL 33612-3987</Title>
            <Status>
              <UnitBadge><BuildingIcon />123 Howard Ave</UnitBadge>
              <span>Occupied by:</span>
              <LeaseBadge>No Lease</LeaseBadge>
            </Status>
          </HeaderText>
          <ActionsSlot>
            <PrimaryButton $large>Actions<ChevronDown /></PrimaryButton>
          </ActionsSlot>
        </UnitHeader>

        <Tabs role="tablist">
          {tabs.map((label, i) => (
            <Tab key={label} role="tab" aria-selected={i === 0} $active={i === 0}>{label}</Tab>
          ))}
        </Tabs>

        <Highlighted>
          <SectionHead>
            <SectionTitle>Unit Information</SectionTitle>
            <AddEdit />
          </SectionHead>
          <Facts>
            {facts.map((f) => (
              <Fact key={f.name}>
                <FactName>{f.name}</FactName>
                <FactValue>{f.value}</FactValue>
              </Fact>
            ))}
          </Facts>
        </Highlighted>

        <Section>
          <SectionHead>
            <SectionTitle>Amenities</SectionTitle>
            <AddEdit />
          </SectionHead>
          <EmptyCard>
            <EmptyIcon><InfoIcon /></EmptyIcon>
            <EmptyTitle>No amenities</EmptyTitle>
            <EmptyText>No amenities added to this unit.</EmptyText>
          </EmptyCard>
        </Section>
      </Main>
    </Page>
  );
}
